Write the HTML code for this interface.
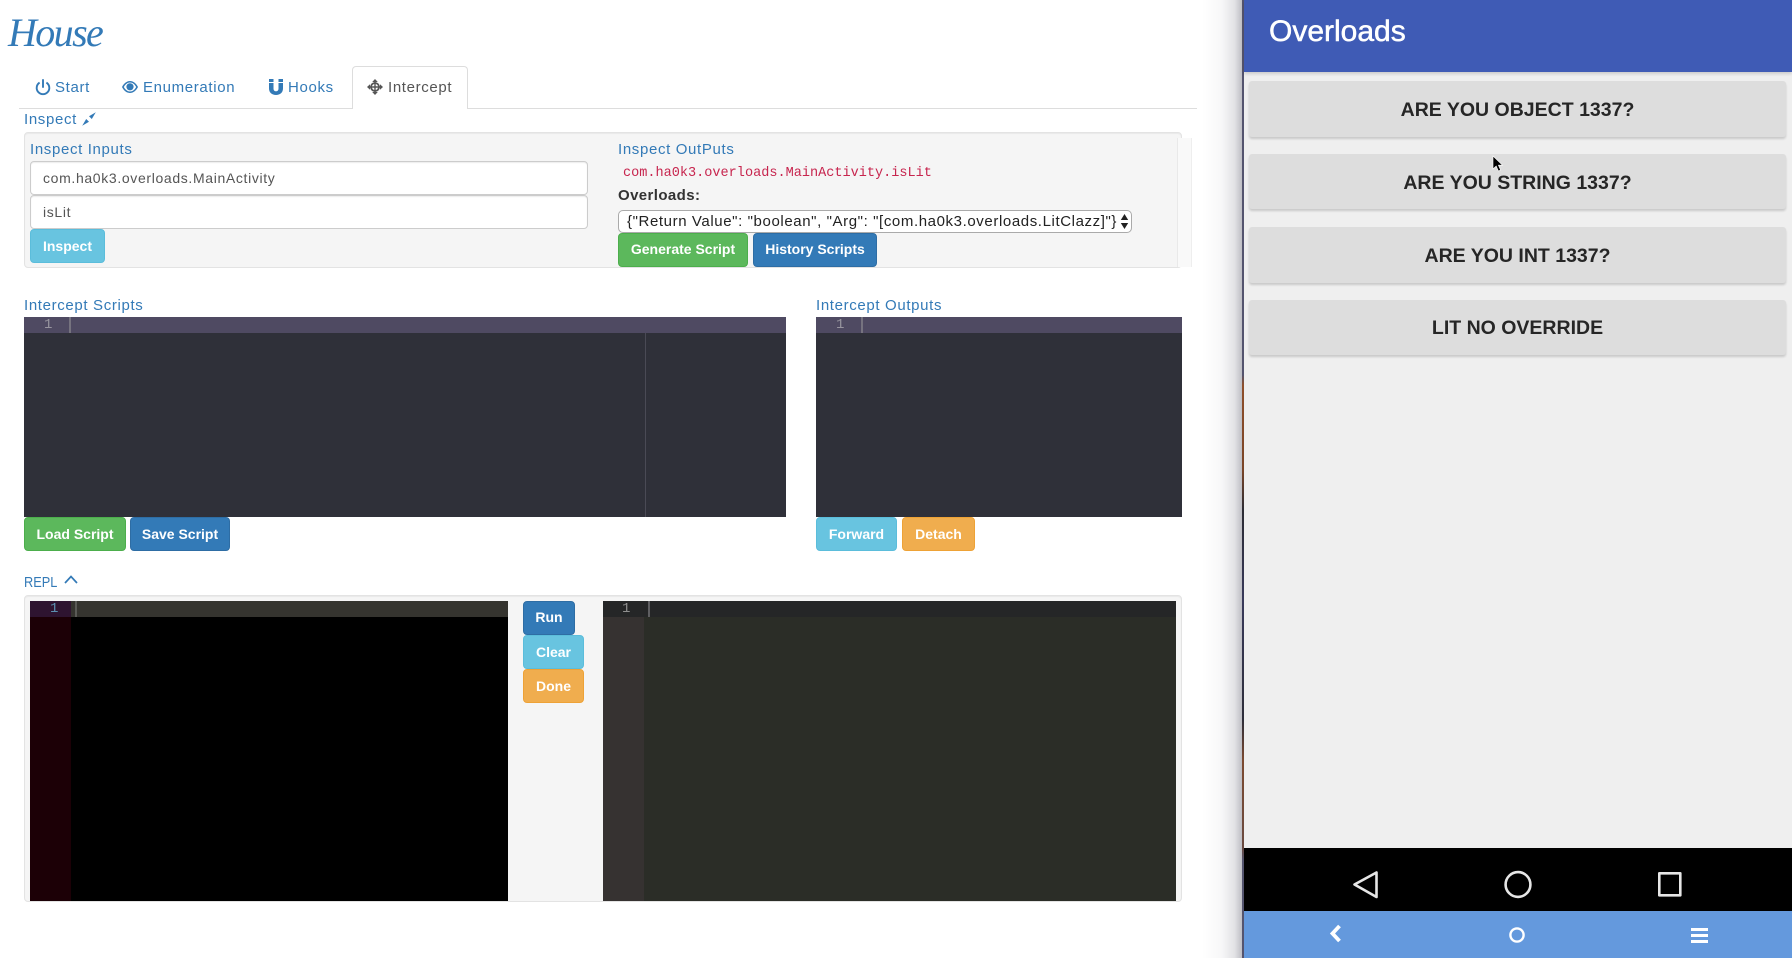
<!DOCTYPE html>
<html><head><meta charset="utf-8"><title>House</title>
<style>
html,body{margin:0;padding:0;background:#fff;width:1792px;height:958px;overflow:hidden}
body{position:relative;font-family:"Liberation Sans",sans-serif;font-size:15px;color:#555}
#w{position:absolute;left:0;top:0;width:1792px;height:958px;filter:blur(.3px);overflow:hidden;background:#fff}
.a{position:absolute;box-sizing:border-box;white-space:nowrap}
.t{position:absolute;white-space:nowrap;line-height:20px;height:20px;letter-spacing:.65px}
.blue{color:#337ab7}
.btn{position:absolute;box-sizing:border-box;border-radius:4px;color:#fff;font-weight:bold;font-size:14px;text-align:center;border:1px solid;line-height:32px;white-space:nowrap}
.g{background:#5cb85c;border-color:#4cae4c}
.b{background:#337ab7;border-color:#2e6da4}
.c{background:#68c4e0;border-color:#5bbddb}
.o{background:#f0ad4e;border-color:#eea236}
.well{position:absolute;box-sizing:border-box;background:#f5f5f5;border:1px solid #e3e3e3;border-radius:4px;box-shadow:inset 0 1px 1px rgba(0,0,0,.05)}
.inp{position:absolute;box-sizing:border-box;background:#fff;border:1px solid #ccc;border-radius:4px;font-size:14px;letter-spacing:.65px;color:#555;padding-left:12px;line-height:33px;box-shadow:inset 0 1px 1px rgba(0,0,0,.08)}
.ln{position:absolute;font-family:"Liberation Mono",monospace;font-size:14px;line-height:16px;height:16px}
.pb{position:absolute;left:1249px;width:537px;background:#dddddd;border-radius:3px;box-shadow:0 2px 2px rgba(0,0,0,.16);text-align:center;color:#262626;font-size:19.5px;font-weight:bold}
svg{position:absolute;display:block}
</style></head><body><div id="w">

<div class="t blue" style="left:8px;top:10px;height:46px;line-height:46px;font-family:'Liberation Serif',serif;font-style:italic;font-size:40px;letter-spacing:-1.6px;">House</div>

<!-- tabs -->
<div class="a" style="left:19px;top:108px;width:1178px;height:1px;background:#ddd"></div>
<div class="a" style="left:352px;top:66px;width:116px;height:43px;background:#fff;border:1px solid #ddd;border-bottom:0;border-radius:4px 4px 0 0"></div>

<svg style="left:35px;top:79px" width="16" height="17" viewBox="0 0 16 17" fill="none" stroke="#337ab7" stroke-width="1.9"><path d="M4.6 3.6A6.3 6.3 0 1 0 11.4 3.6"/><path d="M8 1v7" stroke-linecap="round"/></svg>
<div class="t blue" style="left:55px;top:78px">Start</div>

<svg style="left:122px;top:80px" width="16" height="14" viewBox="0 0 16 14"><path fill="#337ab7" fill-rule="evenodd" d="M0 7C2 3 5 1 8 1s6 2 8 6c-2 4-5 6-8 6S2 11 0 7zM1.800 7C3.400 10 5.600 11.500 8 11.500S12.600 10 14.200 7C12.600 4 10.400 2.500 8 2.500S3.400 4 1.800 7z"/><circle cx="8" cy="6.800" r="3.600" fill="#337ab7"/></svg>
<div class="t blue" style="left:143px;top:78px">Enumeration</div>

<svg style="left:269px;top:79px" width="14" height="16" viewBox="0 0 14 16"><path fill="#337ab7" d="M0 0h4.500v3H0zM9.500 0H14v3H9.500z"/><path fill="#337ab7" d="M0 4h4.500v5.500c0 1.800 1 2.800 2.500 2.800s2.500-1 2.500-2.800V4H14v5.500C14 13.500 11 16 7 16S0 13.500 0 9.500z"/></svg>
<div class="t blue" style="left:288px;top:78px">Hooks</div>

<svg style="left:367px;top:79px" width="16" height="16" viewBox="0 0 16 16" fill="#555"><path d="M8 0l2.800 3H5.200zM8 16l-2.800-3h5.600zM0 8l3-2.800v5.600zM16 8l-3 2.800V5.200z"/><circle cx="8" cy="8" r="4" fill="none" stroke="#555" stroke-width="1.8"/><path d="M7.300 2.500h1.400v11H7.300zM2.500 7.300h11v1.400h-11z"/></svg>
<div class="t" style="left:388px;top:78px;color:#555">Intercept</div>

<!-- inspect -->
<div class="t blue" style="left:24px;top:110px">Inspect</div>
<svg style="left:82px;top:112px" width="14" height="14" viewBox="0 0 14 14" fill="#337ab7"><path d="M13.800.2L9.800 7 7 4.200z"/><path d="M.2 13.800L4.200 7 7 9.800z"/></svg>

<div class="well" style="left:24px;top:132px;width:1158px;height:136px"></div>
<div class="a" style="left:1177px;top:138px;width:15px;height:129px;background:#f9f9f9;border-left:1px solid #e9e9e9;border-right:1px solid #eeeeee"></div>

<div class="t blue" style="left:30px;top:140px">Inspect Inputs</div>
<div class="inp" style="left:30px;top:161px;width:558px;height:34px">com.ha0k3.overloads.MainActivity</div>
<div class="inp" style="left:30px;top:195px;width:558px;height:34px">isLit</div>
<div class="btn c" style="left:30px;top:229px;width:75px;height:34px">Inspect</div>

<div class="t blue" style="left:618px;top:140px">Inspect OutPuts</div>
<div class="t" style="left:623px;top:164px;font-family:'Liberation Mono',monospace;font-size:13.55px;letter-spacing:0;color:#c7254e">com.ha0k3.overloads.MainActivity.isLit</div>
<div class="t" style="left:618px;top:186px;font-weight:bold;font-size:15px;letter-spacing:.4px;color:#333">Overloads:</div>
<div class="a" style="left:618px;top:210px;width:514px;height:23px;background:#fff;border:1px solid #aaa;border-radius:5px;font-size:15px;letter-spacing:.6px;line-height:21px;padding-left:8px;color:#222">{"Return Value": "boolean", "Arg": "[com.ha0k3.overloads.LitClazz]"}</div>
<svg style="left:1120px;top:213px" width="9" height="17" viewBox="0 0 9 17" fill="#222"><path d="M4.500 1l3.700 6H.8zM4.500 16L.8 10h7.400z"/></svg>
<div class="btn g" style="left:618px;top:233px;width:130px;height:34px;line-height:31px">Generate Script</div>
<div class="btn b" style="left:753px;top:233px;width:124px;height:34px;line-height:31px">History Scripts</div>

<!-- editors -->
<div class="t blue" style="left:24px;top:296px">Intercept Scripts</div>
<div class="t blue" style="left:816px;top:296px">Intercept Outputs</div>

<div class="a" style="left:24px;top:317px;width:762px;height:200px;background:#2f3039"></div>
<div class="a" style="left:24px;top:317px;width:762px;height:16px;background:#4f4a62"></div>
<div class="a" style="left:645px;top:333px;width:1px;height:184px;background:#4a4a55"></div>
<div class="a" style="left:69px;top:317px;width:2px;height:16px;background:#76737f"></div>
<div class="ln" style="left:44px;top:317px;color:#98959f">1</div>

<div class="a" style="left:816px;top:317px;width:366px;height:200px;background:#2f3039"></div>
<div class="a" style="left:816px;top:317px;width:366px;height:16px;background:#4f4a62"></div>
<div class="a" style="left:861px;top:317px;width:2px;height:16px;background:#76737f"></div>
<div class="ln" style="left:836px;top:317px;color:#98959f">1</div>

<div class="btn g" style="left:24px;top:517px;width:102px;height:34px">Load Script</div>
<div class="btn b" style="left:130px;top:517px;width:100px;height:34px">Save Script</div>
<div class="btn c" style="left:816px;top:517px;width:81px;height:34px">Forward</div>
<div class="btn o" style="left:902px;top:517px;width:73px;height:34px">Detach</div>

<!-- REPL -->
<div class="t blue" style="left:24px;top:573px;letter-spacing:0;transform:scaleX(.85);transform-origin:0 0">REPL</div>
<svg style="left:64px;top:575px" width="14" height="9" viewBox="0 0 14 9" fill="none" stroke="#337ab7" stroke-width="1.7"><path d="M1 8L7 1.500l6 6.500"/></svg>
<div class="well" style="left:24px;top:595px;width:1158px;height:307px"></div>

<div class="a" style="left:30px;top:601px;width:478px;height:300px;background:#000"></div>
<div class="a" style="left:30px;top:601px;width:41px;height:300px;background:#1c0006"></div>
<div class="a" style="left:30px;top:601px;width:41px;height:16px;background:#2e1430"></div>
<div class="a" style="left:71px;top:601px;width:437px;height:16px;background:#35342f"></div>
<div class="a" style="left:75px;top:601px;width:2px;height:16px;background:#5a5a56"></div>
<div class="ln" style="left:50px;top:601px;color:#5b8fb0">1</div>

<div class="btn b" style="left:523px;top:601px;width:52px;height:34px;line-height:31px">Run</div>
<div class="btn c" style="left:523px;top:635px;width:61px;height:34px">Clear</div>
<div class="btn o" style="left:523px;top:669px;width:61px;height:34px">Done</div>

<div class="a" style="left:603px;top:601px;width:573px;height:300px;background:#2b2d27"></div>
<div class="a" style="left:603px;top:601px;width:41px;height:300px;background:#363231"></div>
<div class="a" style="left:603px;top:601px;width:573px;height:16px;background:#252627"></div>
<div class="a" style="left:648px;top:601px;width:2px;height:16px;background:#5f5f62"></div>
<div class="ln" style="left:622px;top:601px;color:#8f8f8f">1</div>

<!-- phone -->
<div class="a" style="left:1202px;top:0;width:40px;height:958px;background:linear-gradient(to right,rgba(190,190,196,0) 0%,rgba(190,190,196,.12) 50%,rgba(190,190,196,.45) 82%,rgba(190,190,196,1) 100%)"></div>
<div class="a" style="left:1242px;top:0;width:2px;height:958px;background:linear-gradient(to bottom,#54546e 0,#54546e 375px,#8f4f2a 385px,#7a4528 470px,#2c2c34 510px,#38395a 600px,#2e2e3a 720px,#7c4a30 760px,#6a4a40 848px,#54546e 860px,#54546e 958px)"></div>
<div class="a" style="left:1244px;top:0;width:548px;height:958px;background:#efefef"></div>
<div class="a" style="left:1244px;top:0;width:548px;height:72px;background:#3f5bb5;box-shadow:0 2px 3px rgba(0,0,0,.15)"></div>
<div class="t" style="left:1269px;top:16px;height:32px;line-height:32px;color:#fff;font-size:30px;letter-spacing:0;-webkit-text-stroke:.5px #fff">Overloads</div>

<div class="pb" style="top:81px;height:56px;line-height:59px">ARE YOU OBJECT 1337?</div>
<div class="pb" style="top:154px;height:55px;line-height:59px">ARE YOU STRING 1337?</div>
<div class="pb" style="top:227px;height:56px;line-height:59px">ARE YOU INT 1337?</div>
<div class="pb" style="top:300px;height:55px;line-height:57px">LIT NO OVERRIDE</div>

<svg style="left:1492px;top:155px" width="12" height="18" viewBox="0 0 12 18"><path d="M1 1v13l3.200-3 2.200 5 2.200-1-2.200-4.800H10.500z" fill="#000" stroke="#fff" stroke-width=".6"/></svg>

<div class="a" style="left:1244px;top:848px;width:548px;height:63px;background:#000"></div>
<div class="a" style="left:1244px;top:911px;width:548px;height:47px;background:#6499dd"></div>

<svg style="left:1350px;top:868px" width="30" height="33" viewBox="0 0 30 33" fill="none" stroke="#e6e6e6" stroke-width="2.600" stroke-linejoin="round"><path d="M26.500 4.500v24.500L4.500 16.500z"/></svg>
<svg style="left:1503px;top:869px" width="30" height="31" viewBox="0 0 30 31" fill="none" stroke="#e6e6e6" stroke-width="2.600"><circle cx="15" cy="15.500" r="12.400"/></svg>
<svg style="left:1657px;top:871px" width="26" height="27" viewBox="0 0 26 27" fill="none" stroke="#e6e6e6" stroke-width="2.600" stroke-linejoin="round"><rect x="2.300" y="2.300" width="21" height="22"/></svg>

<svg style="left:1329px;top:924px" width="13" height="19" viewBox="0 0 13 19" fill="none" stroke="#fff" stroke-width="3.800"><path d="M10.500 2L3.500 9.500l7 7.500"/></svg>
<svg style="left:1508px;top:926px" width="18" height="18" viewBox="0 0 18 18" fill="none" stroke="#fff" stroke-width="2.400"><circle cx="9" cy="9" r="6.600"/></svg>
<svg style="left:1691px;top:928px" width="17" height="15" viewBox="0 0 17 15" fill="#fff"><rect y="0" width="17" height="3"/><rect y="6" width="17" height="3"/><rect y="12" width="17" height="3"/></svg>

</div></body></html>
